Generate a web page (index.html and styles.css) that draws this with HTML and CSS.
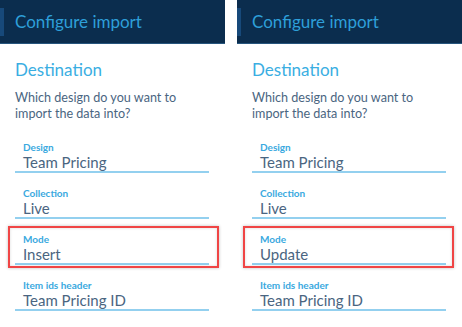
FILE: index.html
```html
<!DOCTYPE html>
<html>
<head>
<meta charset="utf-8">
<link rel="stylesheet" href="styles.css">
</head>
<body>
<div class="panel">
  <div class="header"><span class="bar"></span><span class="title">Configure import</span></div>
  <div class="content">
    <h2 class="section">Destination</h2>
    <p class="desc">Which design do you want to import the data into?</p>
    <div class="field"><div class="label">Design</div><div class="value">Team Pricing</div></div>
    <div class="field"><div class="label">Collection</div><div class="value">Live</div></div>
    <div class="field hl hl-a"><div class="label">Mode</div><div class="value">Insert</div></div>
    <div class="field"><div class="label">Item ids header</div><div class="value">Team Pricing ID</div></div>
  </div>
</div>
<div class="panel">
  <div class="header"><span class="bar"></span><span class="title">Configure import</span></div>
  <div class="content">
    <h2 class="section">Destination</h2>
    <p class="desc">Which design do you want to import the data into?</p>
    <div class="field"><div class="label">Design</div><div class="value">Team Pricing</div></div>
    <div class="field"><div class="label">Collection</div><div class="value">Live</div></div>
    <div class="field hl hl-b"><div class="label">Mode</div><div class="value">Update</div></div>
    <div class="field"><div class="label">Item ids header</div><div class="value">Team Pricing ID</div></div>
  </div>
</div>
</body>
</html>
```
FILE: styles.css
```css
html, body {
  margin: 0;
  padding: 0;
  background: #ffffff;
}
body {
  display: flex;
  gap: 12px;
  width: 462px;
  height: 327px;
  overflow: hidden;
  font-family: Lato, "Open Sans", sans-serif;
}
.panel {
  width: 225px;
  flex: none;
}
.header {
  height: 43px;
  background: #0b2d4e;
  border-bottom: 1px solid #26557d;
  display: flex;
  align-items: center;
}
.bar {
  width: 4px;
  height: 28px;
  background: #17497a;
  flex: none;
}
.title {
  margin-left: 11px;
  font-size: 17px;
  line-height: 43px;
  color: #2e9fd9;
}
.content {
  padding: 14px 16px 0 15px;
}
.section {
  margin: 0;
  font-size: 17px;
  font-weight: normal;
  line-height: 24px;
  color: #3aaee2;
}
.desc {
  margin: 8px 0 0;
  font-size: 12.6px;
  line-height: 16px;
  color: #4a6581;
}
.field {
  position: relative;
  margin-top: 14px;
  padding-left: 8px;
  border-bottom: 2px solid #93d0ef;
}
.desc + .field {
  margin-top: 19px;
}
.label {
  font-size: 10px;
  line-height: 12px;
  font-weight: 700;
  color: #3aa9e0;
}
.value {
  font-size: 15px;
  line-height: 18px;
  color: #4a6581;
}
.hl::after {
  content: "";
  position: absolute;
  top: -7px;
  bottom: -5px;
  border: 2px solid #f04545;
  box-shadow: 0 0 3px rgba(0, 0, 0, 0.25), inset 0 0 3px rgba(0, 0, 0, 0.15);
}
.hl-a::after {
  left: -7px;
  right: -10px;
}
.hl-b::after {
  left: -9px;
  right: -8px;
}
```
